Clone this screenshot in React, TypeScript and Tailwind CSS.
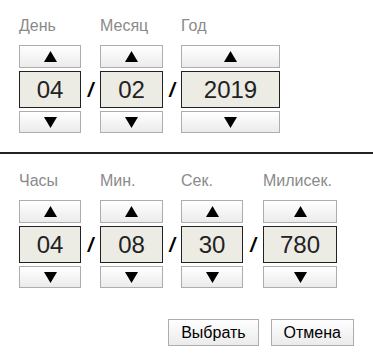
import React from "react";

const Up = () => (
  <svg width="13" height="11" viewBox="0 0 13 11"><polygon points="6.5,0 13,11 0,11" fill="#000" /></svg>
);
const Down = () => (
  <svg width="13" height="11" viewBox="0 0 13 11"><polygon points="0,0 13,0 6.5,11" fill="#000" /></svg>
);

const btn =
  "flex items-center justify-center border border-[#adadad] bg-gradient-to-b from-white to-[#ebebeb]";

function Col({ label, value, w }: { label: string; value: string; w: string }) {
  return (
    <div className={`flex flex-col ${w}`}>
      <div className="h-[18px] leading-[18px] text-[16px] text-[#8a8a8a] mb-[10px] whitespace-nowrap">{label}</div>
      <div className={`${btn} h-[23px]`}><Up /></div>
      <div className="mt-[3px] h-[37px] border border-[#222] bg-[#ecebe4] flex items-center justify-center text-[24px] text-[#222]">
        {value}
      </div>
      <div className={`${btn} mt-[3px] h-[22px]`}><Down /></div>
    </div>
  );
}

function Slash({ w }: { w: string }) {
  return (
    <div className={`flex flex-col pt-[54px] ${w}`}>
      <div className="h-[37px] flex items-center justify-center text-[20px] font-bold italic text-black">/</div>
    </div>
  );
}

export default function App() {
  return (
    <div className="w-[373px] h-[364px] bg-white" style={{ fontFamily: '"Liberation Sans", Arial, sans-serif' }}>
      <div className="flex pl-[19px] pt-[17px]">
        <Col label="День" value="04" w="w-[62px]" />
        <Slash w="w-[19px]" />
        <Col label="Месяц" value="02" w="w-[63px]" />
        <Slash w="w-[18px]" />
        <Col label="Год" value="2019" w="w-[99px]" />
      </div>
      <div className="mt-[19px] h-[2px] bg-[#222]" />
      <div className="flex pl-[19px] pt-[18px]">
        <Col label="Часы" value="04" w="w-[62px]" />
        <Slash w="w-[19px]" />
        <Col label="Мин." value="08" w="w-[63px]" />
        <Slash w="w-[18px]" />
        <Col label="Сек." value="30" w="w-[62px]" />
        <Slash w="w-[20px]" />
        <Col label="Милисек." value="780" w="w-[74px]" />
      </div>
      <div className="flex justify-end gap-[12px] pr-[19px] mt-[31px]">
        <button className={`${btn} h-[27px] px-[12px] text-[16px] text-black`}>Выбрать</button>
        <button className={`${btn} h-[27px] px-[12px] text-[16px] text-black`}>Отмена</button>
      </div>
    </div>
  );
}
